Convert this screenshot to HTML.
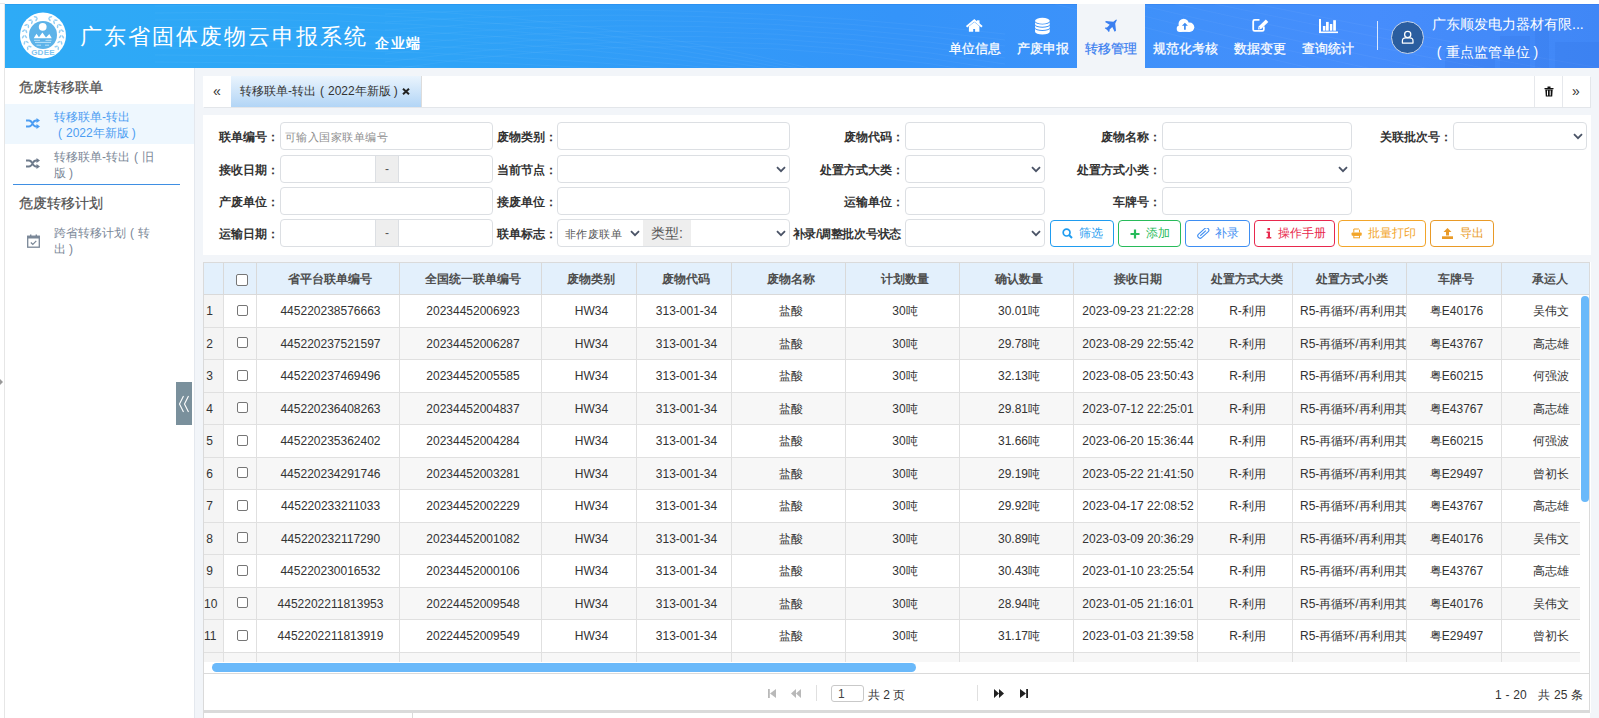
<!DOCTYPE html>
<html><head><meta charset="utf-8"><style>
*{box-sizing:border-box;margin:0;padding:0}
html,body{width:1599px;height:718px;overflow:hidden;background:#fff;font-family:"Liberation Sans",sans-serif;font-size:12px;color:#333}
.abs{position:absolute}
#lline{position:absolute;left:4px;top:4px;width:1px;height:714px;background:#e6e6e6}
#ltri{position:absolute;left:0;top:379px;width:0;height:0;border-top:3px solid transparent;border-bottom:3px solid transparent;border-left:3px solid #999}
#hdr{position:absolute;left:5px;top:4px;width:1594px;height:64px;box-shadow:inset 0 1px 0 rgba(0,70,200,.12);background:linear-gradient(90deg,#2eabf6 0%,#2ea3f7 28%,#329af8 44%,#3494f9 56%,#4190fa 75%,#468dfc 86%,#4087f6 100%);overflow:hidden}
#title{position:absolute;left:75px;top:18px;font-size:22px;color:#fff;white-space:nowrap;letter-spacing:2px}
#sub{position:absolute;left:370px;top:31px;font-size:14px;letter-spacing:1.5px;color:#fff;font-weight:bold;white-space:nowrap}
.nav{position:absolute;top:0;height:64px;text-align:center;color:#fff;font-size:13px;-webkit-text-stroke:.25px currentColor}
.nav .ic{position:absolute;left:0;right:0;top:13px;height:18px}
.nav .tx{position:absolute;left:0;right:0;top:35.5px;white-space:nowrap}
.nav.act{background:#f2f5f9;color:#3b7ff0}
#divd{position:absolute;left:1372px;top:17px;width:1px;height:29px;background:rgba(255,255,255,.8)}
#avatar{position:absolute;left:1386px;top:17px;width:33px;height:33px;border-radius:50%;background:#2a5d9f;border:1px solid #c8d6ea}
#co1{position:absolute;left:1427px;top:11.5px;font-size:14px;color:#fff;white-space:nowrap}
#co2{position:absolute;left:1427px;top:39.5px;font-size:14px;color:#fff;white-space:nowrap}
#side{position:absolute;left:5px;top:68px;width:190px;height:650px;background:#fff;border-right:1px solid #e4e8ee}
.sh{position:absolute;left:14px;font-size:14px;color:#4f4f4f;white-space:nowrap;-webkit-text-stroke:.2px currentColor}
.si{position:absolute;left:0;width:189px}
.si.act{background:#eef7fe}
.si .t{position:absolute;left:49px;font-size:12px;line-height:16px;color:#7a8797;width:104px}
.si.act .t{color:#4c9df2}
.si svg{position:absolute}
#sline{position:absolute;left:8px;top:116px;width:167px;height:1px;background:#3f8fe3}
#handle{position:absolute;left:171px;top:314px;width:16px;height:43px;background:#7a909c}
#content{position:absolute;left:195px;top:68px;width:1404px;height:650px;background:#f2f5f9}
.panel{position:absolute;background:#fff}
#tabs{left:8px;top:8px;width:1387px;height:31px;box-shadow:1px 1px 0 #e3e6ea}
#tabprev{position:absolute;left:0;top:0;width:28px;height:31px;text-align:center;line-height:30px;font-size:14px;color:#333}
#tabact{position:absolute;left:28px;top:0;width:191px;height:31px;background:linear-gradient(#eaf4fd,#b2d5f6);border-right:1px solid #dcdcdc}
#tabact .t{position:absolute;left:9px;top:0;line-height:30px;font-size:12px;color:#333;white-space:nowrap}
#tabact .x{position:absolute;left:172px;top:0;line-height:30px;font-size:13px;color:#222;font-weight:bold}
.tbtn{position:absolute;top:0;width:28px;height:31px;border-left:1px solid #e6e8ec}
#form{left:8px;top:47px;width:1388px;height:140px}
.lb{position:absolute;font-size:12px;font-weight:bold;color:#333;white-space:nowrap;text-align:right;line-height:31px;margin-left:-1px}
.ip{position:absolute;height:28px;border:1px solid #dcdfe3;border-radius:4px;background:#fff}
.ip .ph{position:absolute;left:4px;top:0;line-height:29px;color:#8c8c8c;font-size:11px;letter-spacing:.45px;white-space:nowrap}
.chev{position:absolute;width:10px;height:7px}
.addon{position:absolute;top:0;height:26px;background:#eee}
.btn{position:absolute;top:105px;height:27px;border:1px solid;border-radius:4px;background:#fff;font-size:12px;white-space:nowrap}
.btn .bt{position:absolute;top:0;line-height:25px}
.btn svg{position:absolute}
#tpanel{left:8px;top:194px;width:1387px;height:451px;border:1px solid #dadada;border-bottom:none;box-shadow:1px 0 0 #fff}
#grid{position:absolute;left:0;top:0;width:1385px;height:399px;overflow:hidden}
.hdr{position:absolute;left:0;top:0;width:1400px;height:32px;background:#e3f0fc;border-bottom:1px solid #d9d9d9}
.hc{position:absolute;top:0;height:31px;line-height:32px;text-align:center;font-weight:bold;color:#4e4e4e;border-left:1px solid #d9d9d9;white-space:nowrap;padding-left:4px}
.row{position:absolute;left:0;width:1376px;height:32.5px;background:#fff;border-bottom:1px solid #e0e0e0}
.row.even{background:#f7f7f7}
.c{position:absolute;top:0;height:31.5px;line-height:33px;text-align:center;color:#333;border-left:1px solid #e0e0e0;white-space:nowrap;overflow:hidden;padding-left:5px}
.c.rn{background:#f4f4f4;text-align:center;padding-left:0;padding-right:8px;border-left:none;overflow:visible}
.c.lft{text-align:left;padding-left:7px}
.hcb{width:12px!important;height:12px!important;position:relative;top:1.5px}
.cb{display:inline-block;width:11px;height:11px;border:1px solid #767676;border-radius:2px;background:#fff;vertical-align:middle;margin-top:-3px;margin-left:0px}
#vscroll{position:absolute;left:1377px;top:33px;width:8px;height:206px;background:#6ab9fa;border-radius:4px}
#hscroll{position:absolute;left:8px;top:400px;width:704px;height:9px;background:#6ab9fa;border-radius:5px}
#pager{position:absolute;left:0;top:410px;width:1385px;height:38px;border-top:1px solid #dadada}
#bar{position:absolute;left:8px;top:642px;width:1387px;height:3px;background:#dadada}
#below{position:absolute;left:8px;top:645px;width:1387px;height:10px;background:#fff;border-left:1px solid #dadada}

.lp{display:inline-block;width:1em;text-align:right;padding-right:.33em}
.rp{display:inline-block;width:1em;text-align:left;padding-left:.25em}
#tline{position:absolute;left:0;top:3px;width:5px;height:1px;background:#eaeaea}

</style></head><body>
<div id="lline"></div>
<div id="tline"></div>
<div id="ltri"></div>
<div id="hdr">
  <svg class="abs" style="left:0;top:0" width="1594" height="64" viewBox="0 0 1594 64" fill="none" stroke="rgba(255,255,255,0.045)" stroke-width="1"><path d="M150 2 Q 520 -8.0 830 70" /><path d="M150 9 Q 520 0.5 830 72" /><path d="M150 16 Q 520 9.0 830 74" /><path d="M150 23 Q 520 17.5 830 76" /><path d="M150 30 Q 520 26.0 830 78" /><path d="M150 37 Q 520 34.5 830 80" /><path d="M150 44 Q 520 43.0 830 82" /><path d="M150 51 Q 520 51.5 830 84" /><path d="M150 58 Q 520 60.0 830 86" /><path d="M150 65 Q 520 68.5 830 88" /><path d="M380 10 Q 700 -5 1000 30" /><path d="M380 18 Q 700 -2 1000 36" /><path d="M380 26 Q 700 1 1000 42" /><path d="M380 34 Q 700 4 1000 48" /><path d="M380 42 Q 700 7 1000 54" /><path d="M380 50 Q 700 10 1000 60" /><path d="M380 58 Q 700 13 1000 66" /><path d="M380 66 Q 700 16 1000 72" /><path d="M1050 0 Q 1200 40 1330 70" /><path d="M1090 0 Q 1250 40 1390 70" /><path d="M1130 0 Q 1300 40 1450 70" /><path d="M1170 0 Q 1350 40 1510 70" /><path d="M1210 0 Q 1400 40 1570 70" /><path d="M1250 0 Q 1450 40 1630 70" /><g fill="rgba(30,90,210,0.10)" stroke="none"><rect x="1495" y="32" width="30" height="32"/><rect x="1530" y="20" width="14" height="44"/><rect x="1550" y="38" width="44" height="26"/><rect x="1440" y="48" width="50" height="16"/></g></svg>
  <svg class="abs" style="left:15px;top:8px" width="46" height="47" viewBox="0 0 46 47">
    <circle cx="23" cy="23.5" r="23" fill="#fff"/>
    <ellipse cx="9.82" cy="34.56" rx="1.9" ry="0.8" transform="rotate(195.0 9.82 34.56)" fill="#94cff4"/><ellipse cx="7.68" cy="36.36" rx="1.9" ry="0.8" transform="rotate(265.0 7.68 36.36)" fill="#94cff4"/><ellipse cx="7.05" cy="29.94" rx="1.9" ry="0.8" transform="rotate(213.0 7.05 29.94)" fill="#94cff4"/><ellipse cx="4.46" cy="30.99" rx="1.9" ry="0.8" transform="rotate(283.0 4.46 30.99)" fill="#94cff4"/><ellipse cx="5.84" cy="24.70" rx="1.9" ry="0.8" transform="rotate(231.0 5.84 24.70)" fill="#94cff4"/><ellipse cx="3.05" cy="24.90" rx="1.9" ry="0.8" transform="rotate(301.0 3.05 24.90)" fill="#94cff4"/><ellipse cx="6.31" cy="19.34" rx="1.9" ry="0.8" transform="rotate(249.0 6.31 19.34)" fill="#94cff4"/><ellipse cx="3.59" cy="18.66" rx="1.9" ry="0.8" transform="rotate(319.0 3.59 18.66)" fill="#94cff4"/><ellipse cx="8.41" cy="14.39" rx="1.9" ry="0.8" transform="rotate(267.0 8.41 14.39)" fill="#94cff4"/><ellipse cx="6.04" cy="12.90" rx="1.9" ry="0.8" transform="rotate(337.0 6.04 12.90)" fill="#94cff4"/><ellipse cx="11.94" cy="10.32" rx="1.9" ry="0.8" transform="rotate(285.0 11.94 10.32)" fill="#94cff4"/><ellipse cx="10.14" cy="8.18" rx="1.9" ry="0.8" transform="rotate(355.0 10.14 8.18)" fill="#94cff4"/><ellipse cx="16.56" cy="7.55" rx="1.9" ry="0.8" transform="rotate(303.0 16.56 7.55)" fill="#94cff4"/><ellipse cx="15.51" cy="4.96" rx="1.9" ry="0.8" transform="rotate(373.0 15.51 4.96)" fill="#94cff4"/><ellipse cx="36.18" cy="34.56" rx="1.9" ry="0.8" transform="rotate(-15.0 36.18 34.56)" fill="#94cff4"/><ellipse cx="38.32" cy="36.36" rx="1.9" ry="0.8" transform="rotate(-85.0 38.32 36.36)" fill="#94cff4"/><ellipse cx="38.95" cy="29.94" rx="1.9" ry="0.8" transform="rotate(-33.0 38.95 29.94)" fill="#94cff4"/><ellipse cx="41.54" cy="30.99" rx="1.9" ry="0.8" transform="rotate(-103.0 41.54 30.99)" fill="#94cff4"/><ellipse cx="40.16" cy="24.70" rx="1.9" ry="0.8" transform="rotate(-51.0 40.16 24.70)" fill="#94cff4"/><ellipse cx="42.95" cy="24.90" rx="1.9" ry="0.8" transform="rotate(-121.0 42.95 24.90)" fill="#94cff4"/><ellipse cx="39.69" cy="19.34" rx="1.9" ry="0.8" transform="rotate(-69.0 39.69 19.34)" fill="#94cff4"/><ellipse cx="42.41" cy="18.66" rx="1.9" ry="0.8" transform="rotate(-139.0 42.41 18.66)" fill="#94cff4"/><ellipse cx="37.59" cy="14.39" rx="1.9" ry="0.8" transform="rotate(-87.0 37.59 14.39)" fill="#94cff4"/><ellipse cx="39.96" cy="12.90" rx="1.9" ry="0.8" transform="rotate(-157.0 39.96 12.90)" fill="#94cff4"/><ellipse cx="34.06" cy="10.32" rx="1.9" ry="0.8" transform="rotate(-105.0 34.06 10.32)" fill="#94cff4"/><ellipse cx="35.86" cy="8.18" rx="1.9" ry="0.8" transform="rotate(-175.0 35.86 8.18)" fill="#94cff4"/><ellipse cx="29.44" cy="7.55" rx="1.9" ry="0.8" transform="rotate(-123.0 29.44 7.55)" fill="#94cff4"/><ellipse cx="30.49" cy="4.96" rx="1.9" ry="0.8" transform="rotate(-193.0 30.49 4.96)" fill="#94cff4"/>
    <circle cx="23" cy="23" r="14" fill="#5db3e9"/>
    <circle cx="22.7" cy="14.8" r="3.9" fill="#fff"/>
    <path d="M13.7 26.3 L16.5 21.8 L19.6 26.3 Z M18.3 26.3 L22.4 20.6 L26.5 26.3 Z M25.3 26.3 L29.3 22 L31.8 26.3 Z" fill="#fff"/>
    <path d="M14 28.3 H20 M25.5 28.3 H31.5 M15 30.4 H31 M16.5 33.2 H21 M25 33.2 H29" stroke="#c5e6fa" stroke-width="0.9"/>
    <text x="23" y="43.2" text-anchor="middle" font-size="7" font-weight="bold" fill="#7fc4ef" font-family="Liberation Sans" letter-spacing="0.2" transform="scale(1.15 1) translate(-3 0)">GDEE</text>
  </svg>
  <div id="title">广东省固体废物云申报系统</div>
  <div id="sub">企业端</div>

  <div class="nav" style="left:936px;width:68px">
    <svg class="ic" viewBox="0 0 68 18" width="68" height="18"><path d="M25.6 9.8 L33.3 3.3 L41 9.8" fill="none" stroke="#fff" stroke-width="2" stroke-linejoin="miter"/><rect x="36" y="3.3" width="2.5" height="4" fill="#fff"/><path d="M27.9 9.4 L33.3 5 L38.4 9.2 V14.8 H34.1 V12 H32.2 V14.8 H27.9 Z" fill="#fff"/></svg>
    <div class="tx">单位信息</div>
  </div>
  <div class="nav" style="left:1004px;width:68px">
    <svg class="ic" viewBox="0 0 68 18" width="68" height="18"><ellipse cx="33.4" cy="3.75" rx="7.35" ry="2.95" fill="#fff"/><path d="M26.05 4.9 A7.35 2.6 0 0 0 40.75 4.9 V7.2 A7.35 2.6 0 0 1 26.05 7.2 Z M26.05 8.2 A7.35 2.6 0 0 0 40.75 8.2 V10.5 A7.35 2.6 0 0 1 26.05 10.5 Z M26.05 11.5 A7.35 2.6 0 0 0 40.75 11.5 V14.8 A7.35 2.6 0 0 1 26.05 14.8 Z" fill="#fff"/></svg>
    <div class="tx">产废申报</div>
  </div>
  <div class="nav act" style="left:1072px;width:68px">
    <svg class="ic" viewBox="0 0 68 18" width="68" height="18"><path d="M39.9 2.9 L38.2 6.4 L39 13.8 L37.6 14.8 L35.3 10 L32.6 12.6 L32.6 14.3 L31.6 14.9 L30.2 12.9 L27.8 11.3 L28.3 10.4 L30 10.5 L32.7 7.8 L28 5 L29 4 L36.3 4.8 L39.2 2.6 Z" fill="#3b7ff0"/></svg>
    <div class="tx">转移管理</div>
  </div>
  <div class="nav" style="left:1140px;width:81px">
    <svg class="ic" viewBox="0 0 81 18" width="81" height="18"><circle cx="38.7" cy="7" r="5.2" fill="#fff"/><circle cx="44.6" cy="10.2" r="4.7" fill="#fff"/><circle cx="34.9" cy="11.7" r="3.2" fill="#fff"/><rect x="34.9" y="9" width="9.7" height="5.9" fill="#fff"/><path d="M39.9 5.8 L42.9 8.8 H40.75 V12.7 H39.05 V8.8 H36.9 Z" fill="#3d8cf2"/></svg>
    <div class="tx">规范化考核</div>
  </div>
  <div class="nav" style="left:1221px;width:68px">
    <svg class="ic" viewBox="0 0 68 18" width="68" height="18"><path d="M33.5 2.9 H28.7 Q27.2 2.9 27.2 4.4 V12.4 Q27.2 13.9 28.7 13.9 H36.3 Q37.8 13.9 37.8 12.4 V9.6" fill="none" stroke="#fff" stroke-width="1.8"/><path d="M32 12.6 L32.6 9.6 L39.8 2.4 L42.3 4.9 L35.1 12 Z" fill="#fff"/><path d="M32.9 11.6 L33.3 10.3 L34.3 11.2 Z" fill="#3b8af2"/></svg>
    <div class="tx">数据变更</div>
  </div>
  <div class="nav" style="left:1289px;width:68px">
    <svg class="ic" viewBox="0 0 68 18" width="68" height="18"><rect x="25" y="2" width="2" height="14" fill="#fff"/><rect x="25" y="14.5" width="19" height="1.6" fill="#fff"/><rect x="28.9" y="9" width="2.5" height="4.7" fill="#fff"/><rect x="32" y="4.9" width="2.7" height="8.8" fill="#fff"/><rect x="35.9" y="7" width="2.4" height="6.7" fill="#fff"/><rect x="39.2" y="3.2" width="2.7" height="10.5" fill="#fff"/></svg>
    <div class="tx">查询统计</div>
  </div>
  <div id="divd"></div>
  <div id="avatar"><svg class="abs" style="left:0;top:0" width="31" height="31" viewBox="0 0 31 31"><circle cx="15.7" cy="12.4" r="3.1" fill="none" stroke="#fff" stroke-width="1.25"/><path d="M10.4 21.1 V18.9 Q10.4 15.9 13.6 15.9 H17.8 Q21 15.9 21 18.9 V21.1 Z" fill="none" stroke="#fff" stroke-width="1.25" stroke-linejoin="round"/></svg></div>
  <div id="co1">广东顺发电力器材有限...</div>
  <div id="co2"><span class="lp">(</span>重点监管单位<span class="rp">)</span></div>
</div>

<div id="side">
  <div class="sh" style="top:10.5px">危废转移联单</div>
  <div class="si act" style="top:36px;height:40px">
    <svg style="left:21px;top:14px" width="14" height="11" viewBox="0 0 14 11"><path d="M0 2.5 H3 Q5 2.5 6.5 5.5 Q8 8.5 10 8.5 H11.5 M0 8.5 H3 Q5 8.5 6.5 5.5 Q8 2.5 10 2.5 H11.5" fill="none" stroke="#4c9df2" stroke-width="1.8"/><path d="M10.5 0 L14 2.5 L10.5 5 Z M10.5 6 L14 8.5 L10.5 11 Z" fill="#4c9df2"/></svg>
    <div class="t" style="top:5px">转移联单-转出<br><span class="lp">(</span>2022年新版<span class="rp">)</span></div>
  </div>
  <div class="si" style="top:76px;height:39px">
    <svg style="left:21px;top:14px" width="14" height="11" viewBox="0 0 14 11"><path d="M0 2.5 H3 Q5 2.5 6.5 5.5 Q8 8.5 10 8.5 H11.5 M0 8.5 H3 Q5 8.5 6.5 5.5 Q8 2.5 10 2.5 H11.5" fill="none" stroke="#6e7b8c" stroke-width="1.8"/><path d="M10.5 0 L14 2.5 L10.5 5 Z M10.5 6 L14 8.5 L10.5 11 Z" fill="#6e7b8c"/></svg>
    <div class="t" style="top:5px">转移联单-转出<span class="lp">(</span>旧版<span class="rp">)</span></div>
  </div>
  <div id="sline"></div>
  <div class="sh" style="top:126.5px">危废转移计划</div>
  <div class="si" style="top:155px;height:40px">
    <svg style="left:22px;top:11px" width="13" height="14" viewBox="0 0 13 14"><rect x="0.7" y="2.2" width="11.6" height="11" fill="none" stroke="#7a8797" stroke-width="1.3"/><rect x="0.7" y="2.2" width="11.6" height="2.3" fill="#7a8797"/><rect x="3" y="0.5" width="1.4" height="3" fill="#7a8797"/><rect x="8.6" y="0.5" width="1.4" height="3" fill="#7a8797"/><path d="M3.8 8.5 L5.8 10.3 L9.3 6.8" fill="none" stroke="#7a8797" stroke-width="1.2"/></svg>
    <div class="t" style="top:2px">跨省转移计划<span class="lp">(</span>转出<span class="rp">)</span></div>
  </div>
  <div id="handle"><svg class="abs" style="left:0;top:0" width="16" height="43" viewBox="0 0 16 43"><path d="M7.5 14 L3.5 22 L7.5 30 M12.5 14 L8.5 22 L12.5 30" fill="none" stroke="#fff" stroke-width="1.1"/></svg></div>
</div>

<div id="content">
  <div class="panel" id="tabs">
    <div id="tabprev">«</div>
    <div id="tabact"><span class="t">转移联单-转出<span class="lp">(</span>2022年新版<span class="rp">)</span></span><svg class="abs" style="left:171px;top:12px" width="8" height="7" viewBox="0 0 8 7"><path d="M1 0.8 L7 6.2 M7 0.8 L1 6.2" stroke="#222" stroke-width="2"/></svg></div>
    <div class="tbtn" style="left:1331px"><svg class="abs" style="left:9px;top:10px" width="10" height="11" viewBox="0 0 10 11"><path d="M3.5 0.5 H6.5 V2 H9.5 V3.3 H0.5 V2 H3.5 Z" fill="#111"/><path d="M1.3 3.5 H8.7 L8.2 10.5 H1.8 Z" fill="#111"/><rect x="3" y="4.5" width="1" height="5" fill="#fff"/><rect x="5.7" y="4.5" width="1" height="5" fill="#fff"/></svg></div>
    <div class="tbtn" style="left:1359px"><div class="abs" style="left:9px;top:0;line-height:30px;font-size:14px;color:#333">»</div></div>
  </div>
  <div class="panel" id="form">
    <!-- row1 -->
    <div class="lb" style="left:0;width:77px;top:7px">联单编号：</div>
    <div class="ip" style="left:77px;top:7px;width:213px"><span class="ph">可输入国家联单编号</span></div>
    <div class="lb" style="left:289px;width:66px;top:7px">废物类别：</div>
    <div class="ip" style="left:354px;top:7px;width:233px"></div>
    <div class="lb" style="left:586px;width:116px;top:7px">废物代码：</div>
    <div class="ip" style="left:702px;top:7px;width:140px"></div>
    <div class="lb" style="left:841px;width:118px;top:7px">废物名称：</div>
    <div class="ip" style="left:959px;top:7px;width:190px"></div>
    <div class="lb" style="left:1148px;width:102px;top:7px">关联批次号：</div>
    <div class="ip" style="left:1250px;top:7px;width:134px"><svg class="chev" style="left:119px;top:10px" width="10" height="7" viewBox="0 0 10 7"><path d="M1 1.2 L5 5.2 L9 1.2" fill="none" stroke="#4a5366" stroke-width="1.8"/></svg></div>
    <!-- row2 -->
    <div class="lb" style="left:0;width:77px;top:40px">接收日期：</div>
    <div class="ip" style="left:77px;top:40px;width:213px"><div class="addon" style="left:94px;width:24px;border-left:1px solid #dcdfe3;border-right:1px solid #dcdfe3;text-align:center;line-height:26px;color:#555">-</div></div>
    <div class="lb" style="left:289px;width:66px;top:40px">当前节点：</div>
    <div class="ip" style="left:354px;top:40px;width:233px"><svg class="chev" style="left:218px;top:10px" width="10" height="7" viewBox="0 0 10 7"><path d="M1 1.2 L5 5.2 L9 1.2" fill="none" stroke="#4a5366" stroke-width="1.8"/></svg></div>
    <div class="lb" style="left:586px;width:116px;top:40px">处置方式大类：</div>
    <div class="ip" style="left:702px;top:40px;width:140px"><svg class="chev" style="left:125px;top:10px" width="10" height="7" viewBox="0 0 10 7"><path d="M1 1.2 L5 5.2 L9 1.2" fill="none" stroke="#4a5366" stroke-width="1.8"/></svg></div>
    <div class="lb" style="left:841px;width:118px;top:40px">处置方式小类：</div>
    <div class="ip" style="left:959px;top:40px;width:190px"><svg class="chev" style="left:175px;top:10px" width="10" height="7" viewBox="0 0 10 7"><path d="M1 1.2 L5 5.2 L9 1.2" fill="none" stroke="#4a5366" stroke-width="1.8"/></svg></div>
    <!-- row3 -->
    <div class="lb" style="left:0;width:77px;top:72px">产废单位：</div>
    <div class="ip" style="left:77px;top:72px;width:213px"></div>
    <div class="lb" style="left:289px;width:66px;top:72px">接废单位：</div>
    <div class="ip" style="left:354px;top:72px;width:233px"></div>
    <div class="lb" style="left:586px;width:116px;top:72px">运输单位：</div>
    <div class="ip" style="left:702px;top:72px;width:140px"></div>
    <div class="lb" style="left:841px;width:118px;top:72px">车牌号：</div>
    <div class="ip" style="left:959px;top:72px;width:190px"></div>
    <!-- row4 -->
    <div class="lb" style="left:0;width:77px;top:104px">运输日期：</div>
    <div class="ip" style="left:77px;top:104px;width:213px"><div class="addon" style="left:94px;width:24px;border-left:1px solid #dcdfe3;border-right:1px solid #dcdfe3;text-align:center;line-height:26px;color:#555">-</div></div>
    <div class="lb" style="left:289px;width:66px;top:104px">联单标志：</div>
    <div class="ip" style="left:354px;top:104px;width:233px"><span class="ph" style="left:7px;color:#555">非作废联单</span><svg class="chev" style="left:72px;top:10px" width="10" height="7" viewBox="0 0 10 7"><path d="M1 1.2 L5 5.2 L9 1.2" fill="none" stroke="#4a5366" stroke-width="1.8"/></svg><div class="addon" style="left:85px;width:48px;text-align:center;line-height:26px;font-size:14px;color:#555">类型:</div><svg class="chev" style="left:218px;top:10px" width="10" height="7" viewBox="0 0 10 7"><path d="M1 1.2 L5 5.2 L9 1.2" fill="none" stroke="#4a5366" stroke-width="1.8"/></svg></div>
    <div class="lb" style="left:586px;width:113px;top:104px;letter-spacing:-.3px">补录/调整批次号状态</div>
    <div class="ip" style="left:702px;top:104px;width:140px"><svg class="chev" style="left:125px;top:10px" width="10" height="7" viewBox="0 0 10 7"><path d="M1 1.2 L5 5.2 L9 1.2" fill="none" stroke="#4a5366" stroke-width="1.8"/></svg></div>
    <div class="btn" style="left:847px;width:64px;color:#1f9cf0;border-color:#1f9cf0"><svg style="left:11px;top:7px" width="11" height="11" viewBox="0 0 11 11"><circle cx="4.6" cy="4.6" r="3.4" fill="none" stroke="#1f9cf0" stroke-width="1.7"/><path d="M7 7 L10 10" stroke="#1f9cf0" stroke-width="2"/></svg><span class="bt" style="left:28px">筛选</span></div>
    <div class="btn" style="left:915px;width:63px;color:#27bb5a;border-color:#27bb5a"><svg style="left:11px;top:8px" width="10" height="10" viewBox="0 0 10 10"><path d="M5 0.5 V9.5 M0.5 5 H9.5" stroke="#27bb5a" stroke-width="2.2"/></svg><span class="bt" style="left:27px">添加</span></div>
    <div class="btn" style="left:982px;width:65px;color:#3e8ef2;border-color:#3e8ef2"><svg style="left:11px;top:7px" width="13" height="11" viewBox="0 0 13 11"><g transform="rotate(-42 6.3 5)"><rect x="-0.3" y="2.7" width="13.2" height="4.6" rx="2.3" fill="none" stroke="#3e8ef2" stroke-width="1.1"/><path d="M2.2 5 H9.8" stroke="#3e8ef2" stroke-width="1.1"/></g></svg><span class="bt" style="left:29px">补录</span></div>
    <div class="btn" style="left:1051px;width:81px;color:#e8284d;border-color:#e8284d"><svg style="left:11px;top:7px" width="6" height="11" viewBox="0 0 6 11"><rect x="1.5" y="0" width="2.5" height="2.3" fill="#e8284d"/><path d="M0.5 3.5 H4 V9 H5.3 V10.5 H0.5 V9 H1.8 V5 H0.5 Z" fill="#e8284d"/></svg><span class="bt" style="left:23px">操作手册</span></div>
    <div class="btn" style="left:1135px;width:88px;color:#f2a52a;border-color:#f2a52a"><svg style="left:12px;top:7px" width="11" height="11" viewBox="0 0 11 11"><path d="M2.8 4.5 V1 H7.6 L8.5 1.9 V4.5" fill="none" stroke="#f2a52a" stroke-width="1"/><rect x="0.6" y="4.5" width="10.1" height="3.2" rx="0.8" fill="#f2a52a"/><rect x="2.8" y="7.2" width="5.7" height="2.6" fill="none" stroke="#f2a52a" stroke-width="1"/></svg><span class="bt" style="left:29px">批量打印</span></div>
    <div class="btn" style="left:1227px;width:64px;color:#e99a27;border-color:#e99a27"><svg style="left:11px;top:7px" width="11" height="11" viewBox="0 0 11 11"><path d="M5.5 0 L9.5 4 H7 V7.5 H4 V4 H1.5 Z" fill="#e99a27"/><rect x="0" y="8.3" width="11" height="2.7" fill="#e99a27"/></svg><span class="bt" style="left:29px">导出</span></div>
  </div>
  <div class="panel" id="tpanel">
<div id="grid">
<div class="hdr">
<div class="hc" style="left:0px;width:19px;border-left:none"></div>
<div class="hc" style="left:19px;width:33px"><span class="cb hcb"></span></div>
<div class="hc" style="left:52px;width:143px;">省平台联单编号</div>
<div class="hc" style="left:195px;width:142px;">全国统一联单编号</div>
<div class="hc" style="left:337px;width:95px;">废物类别</div>
<div class="hc" style="left:432px;width:95px;">废物代码</div>
<div class="hc" style="left:527px;width:114px;">废物名称</div>
<div class="hc" style="left:641px;width:114px;">计划数量</div>
<div class="hc" style="left:755px;width:114px;">确认数量</div>
<div class="hc" style="left:869px;width:124px;">接收日期</div>
<div class="hc" style="left:993px;width:95px;">处置方式大类</div>
<div class="hc" style="left:1088px;width:114px;">处置方式小类</div>
<div class="hc" style="left:1202px;width:95px;">车牌号</div>
<div class="hc" style="left:1297px;width:93px;">承运人</div>
</div>
<div class="row" style="top:32.0px">
<div class="c rn" style="left:0px;width:19px">1</div>
<div class="c" style="left:19px;width:33px"><span class="cb"></span></div>
<div class="c" style="left:52px;width:143px">445220238576663</div>
<div class="c" style="left:195px;width:142px">20234452006923</div>
<div class="c" style="left:337px;width:95px">HW34</div>
<div class="c" style="left:432px;width:95px">313-001-34</div>
<div class="c" style="left:527px;width:114px">盐酸</div>
<div class="c" style="left:641px;width:114px">30吨</div>
<div class="c" style="left:755px;width:114px">30.01吨</div>
<div class="c" style="left:869px;width:124px">2023-09-23 21:22:28</div>
<div class="c" style="left:993px;width:95px">R-利用</div>
<div class="c lft" style="left:1088px;width:114px">R5-再循环/再利用其他方式</div>
<div class="c" style="left:1202px;width:95px">粤E40176</div>
<div class="c" style="left:1297px;width:93px">吴伟文</div>
</div>
<div class="row even" style="top:64.5px">
<div class="c rn" style="left:0px;width:19px">2</div>
<div class="c" style="left:19px;width:33px"><span class="cb"></span></div>
<div class="c" style="left:52px;width:143px">445220237521597</div>
<div class="c" style="left:195px;width:142px">20234452006287</div>
<div class="c" style="left:337px;width:95px">HW34</div>
<div class="c" style="left:432px;width:95px">313-001-34</div>
<div class="c" style="left:527px;width:114px">盐酸</div>
<div class="c" style="left:641px;width:114px">30吨</div>
<div class="c" style="left:755px;width:114px">29.78吨</div>
<div class="c" style="left:869px;width:124px">2023-08-29 22:55:42</div>
<div class="c" style="left:993px;width:95px">R-利用</div>
<div class="c lft" style="left:1088px;width:114px">R5-再循环/再利用其他方式</div>
<div class="c" style="left:1202px;width:95px">粤E43767</div>
<div class="c" style="left:1297px;width:93px">高志雄</div>
</div>
<div class="row" style="top:97.0px">
<div class="c rn" style="left:0px;width:19px">3</div>
<div class="c" style="left:19px;width:33px"><span class="cb"></span></div>
<div class="c" style="left:52px;width:143px">445220237469496</div>
<div class="c" style="left:195px;width:142px">20234452005585</div>
<div class="c" style="left:337px;width:95px">HW34</div>
<div class="c" style="left:432px;width:95px">313-001-34</div>
<div class="c" style="left:527px;width:114px">盐酸</div>
<div class="c" style="left:641px;width:114px">30吨</div>
<div class="c" style="left:755px;width:114px">32.13吨</div>
<div class="c" style="left:869px;width:124px">2023-08-05 23:50:43</div>
<div class="c" style="left:993px;width:95px">R-利用</div>
<div class="c lft" style="left:1088px;width:114px">R5-再循环/再利用其他方式</div>
<div class="c" style="left:1202px;width:95px">粤E60215</div>
<div class="c" style="left:1297px;width:93px">何强波</div>
</div>
<div class="row even" style="top:129.5px">
<div class="c rn" style="left:0px;width:19px">4</div>
<div class="c" style="left:19px;width:33px"><span class="cb"></span></div>
<div class="c" style="left:52px;width:143px">445220236408263</div>
<div class="c" style="left:195px;width:142px">20234452004837</div>
<div class="c" style="left:337px;width:95px">HW34</div>
<div class="c" style="left:432px;width:95px">313-001-34</div>
<div class="c" style="left:527px;width:114px">盐酸</div>
<div class="c" style="left:641px;width:114px">30吨</div>
<div class="c" style="left:755px;width:114px">29.81吨</div>
<div class="c" style="left:869px;width:124px">2023-07-12 22:25:01</div>
<div class="c" style="left:993px;width:95px">R-利用</div>
<div class="c lft" style="left:1088px;width:114px">R5-再循环/再利用其他方式</div>
<div class="c" style="left:1202px;width:95px">粤E43767</div>
<div class="c" style="left:1297px;width:93px">高志雄</div>
</div>
<div class="row" style="top:162.0px">
<div class="c rn" style="left:0px;width:19px">5</div>
<div class="c" style="left:19px;width:33px"><span class="cb"></span></div>
<div class="c" style="left:52px;width:143px">445220235362402</div>
<div class="c" style="left:195px;width:142px">20234452004284</div>
<div class="c" style="left:337px;width:95px">HW34</div>
<div class="c" style="left:432px;width:95px">313-001-34</div>
<div class="c" style="left:527px;width:114px">盐酸</div>
<div class="c" style="left:641px;width:114px">30吨</div>
<div class="c" style="left:755px;width:114px">31.66吨</div>
<div class="c" style="left:869px;width:124px">2023-06-20 15:36:44</div>
<div class="c" style="left:993px;width:95px">R-利用</div>
<div class="c lft" style="left:1088px;width:114px">R5-再循环/再利用其他方式</div>
<div class="c" style="left:1202px;width:95px">粤E60215</div>
<div class="c" style="left:1297px;width:93px">何强波</div>
</div>
<div class="row even" style="top:194.5px">
<div class="c rn" style="left:0px;width:19px">6</div>
<div class="c" style="left:19px;width:33px"><span class="cb"></span></div>
<div class="c" style="left:52px;width:143px">445220234291746</div>
<div class="c" style="left:195px;width:142px">20234452003281</div>
<div class="c" style="left:337px;width:95px">HW34</div>
<div class="c" style="left:432px;width:95px">313-001-34</div>
<div class="c" style="left:527px;width:114px">盐酸</div>
<div class="c" style="left:641px;width:114px">30吨</div>
<div class="c" style="left:755px;width:114px">29.19吨</div>
<div class="c" style="left:869px;width:124px">2023-05-22 21:41:50</div>
<div class="c" style="left:993px;width:95px">R-利用</div>
<div class="c lft" style="left:1088px;width:114px">R5-再循环/再利用其他方式</div>
<div class="c" style="left:1202px;width:95px">粤E29497</div>
<div class="c" style="left:1297px;width:93px">曾初长</div>
</div>
<div class="row" style="top:227.0px">
<div class="c rn" style="left:0px;width:19px">7</div>
<div class="c" style="left:19px;width:33px"><span class="cb"></span></div>
<div class="c" style="left:52px;width:143px">445220233211033</div>
<div class="c" style="left:195px;width:142px">20234452002229</div>
<div class="c" style="left:337px;width:95px">HW34</div>
<div class="c" style="left:432px;width:95px">313-001-34</div>
<div class="c" style="left:527px;width:114px">盐酸</div>
<div class="c" style="left:641px;width:114px">30吨</div>
<div class="c" style="left:755px;width:114px">29.92吨</div>
<div class="c" style="left:869px;width:124px">2023-04-17 22:08:52</div>
<div class="c" style="left:993px;width:95px">R-利用</div>
<div class="c lft" style="left:1088px;width:114px">R5-再循环/再利用其他方式</div>
<div class="c" style="left:1202px;width:95px">粤E43767</div>
<div class="c" style="left:1297px;width:93px">高志雄</div>
</div>
<div class="row even" style="top:259.5px">
<div class="c rn" style="left:0px;width:19px">8</div>
<div class="c" style="left:19px;width:33px"><span class="cb"></span></div>
<div class="c" style="left:52px;width:143px">445220232117290</div>
<div class="c" style="left:195px;width:142px">20234452001082</div>
<div class="c" style="left:337px;width:95px">HW34</div>
<div class="c" style="left:432px;width:95px">313-001-34</div>
<div class="c" style="left:527px;width:114px">盐酸</div>
<div class="c" style="left:641px;width:114px">30吨</div>
<div class="c" style="left:755px;width:114px">30.89吨</div>
<div class="c" style="left:869px;width:124px">2023-03-09 20:36:29</div>
<div class="c" style="left:993px;width:95px">R-利用</div>
<div class="c lft" style="left:1088px;width:114px">R5-再循环/再利用其他方式</div>
<div class="c" style="left:1202px;width:95px">粤E40176</div>
<div class="c" style="left:1297px;width:93px">吴伟文</div>
</div>
<div class="row" style="top:292.0px">
<div class="c rn" style="left:0px;width:19px">9</div>
<div class="c" style="left:19px;width:33px"><span class="cb"></span></div>
<div class="c" style="left:52px;width:143px">445220230016532</div>
<div class="c" style="left:195px;width:142px">20234452000106</div>
<div class="c" style="left:337px;width:95px">HW34</div>
<div class="c" style="left:432px;width:95px">313-001-34</div>
<div class="c" style="left:527px;width:114px">盐酸</div>
<div class="c" style="left:641px;width:114px">30吨</div>
<div class="c" style="left:755px;width:114px">30.43吨</div>
<div class="c" style="left:869px;width:124px">2023-01-10 23:25:54</div>
<div class="c" style="left:993px;width:95px">R-利用</div>
<div class="c lft" style="left:1088px;width:114px">R5-再循环/再利用其他方式</div>
<div class="c" style="left:1202px;width:95px">粤E43767</div>
<div class="c" style="left:1297px;width:93px">高志雄</div>
</div>
<div class="row even" style="top:324.5px">
<div class="c rn" style="left:0px;width:19px">10</div>
<div class="c" style="left:19px;width:33px"><span class="cb"></span></div>
<div class="c" style="left:52px;width:143px">4452202211813953</div>
<div class="c" style="left:195px;width:142px">20224452009548</div>
<div class="c" style="left:337px;width:95px">HW34</div>
<div class="c" style="left:432px;width:95px">313-001-34</div>
<div class="c" style="left:527px;width:114px">盐酸</div>
<div class="c" style="left:641px;width:114px">30吨</div>
<div class="c" style="left:755px;width:114px">28.94吨</div>
<div class="c" style="left:869px;width:124px">2023-01-05 21:16:01</div>
<div class="c" style="left:993px;width:95px">R-利用</div>
<div class="c lft" style="left:1088px;width:114px">R5-再循环/再利用其他方式</div>
<div class="c" style="left:1202px;width:95px">粤E40176</div>
<div class="c" style="left:1297px;width:93px">吴伟文</div>
</div>
<div class="row" style="top:357.0px">
<div class="c rn" style="left:0px;width:19px">11</div>
<div class="c" style="left:19px;width:33px"><span class="cb"></span></div>
<div class="c" style="left:52px;width:143px">4452202211813919</div>
<div class="c" style="left:195px;width:142px">20224452009549</div>
<div class="c" style="left:337px;width:95px">HW34</div>
<div class="c" style="left:432px;width:95px">313-001-34</div>
<div class="c" style="left:527px;width:114px">盐酸</div>
<div class="c" style="left:641px;width:114px">30吨</div>
<div class="c" style="left:755px;width:114px">31.17吨</div>
<div class="c" style="left:869px;width:124px">2023-01-03 21:39:58</div>
<div class="c" style="left:993px;width:95px">R-利用</div>
<div class="c lft" style="left:1088px;width:114px">R5-再循环/再利用其他方式</div>
<div class="c" style="left:1202px;width:95px">粤E29497</div>
<div class="c" style="left:1297px;width:93px">曾初长</div>
</div>
<div class="row even" style="top:389.5px">
<div class="c rn" style="left:0px;width:19px"></div>
<div class="c" style="left:19px;width:33px"></div>
<div class="c" style="left:52px;width:143px"></div>
<div class="c" style="left:195px;width:142px"></div>
<div class="c" style="left:337px;width:95px"></div>
<div class="c" style="left:432px;width:95px"></div>
<div class="c" style="left:527px;width:114px"></div>
<div class="c" style="left:641px;width:114px"></div>
<div class="c" style="left:755px;width:114px"></div>
<div class="c" style="left:869px;width:124px"></div>
<div class="c" style="left:993px;width:95px"></div>
<div class="c lft" style="left:1088px;width:114px"></div>
<div class="c" style="left:1202px;width:95px"></div>
<div class="c" style="left:1297px;width:93px"></div>
</div>
</div>
    <div id="vscroll"></div>
    <div id="hscroll"></div>
    <div id="pager">
      <svg class="abs" style="left:564px;top:15px" width="8" height="9" viewBox="0 0 8 9"><rect x="0" y="0" width="1.8" height="9" fill="#b9b9b9"/><path d="M8 0 V9 L2 4.5 Z" fill="#b9b9b9"/></svg>
      <svg class="abs" style="left:587px;top:15px" width="10" height="9" viewBox="0 0 10 9"><path d="M5 0 V9 L0 4.5 Z M10 0 V9 L5 4.5 Z" fill="#b9b9b9"/></svg>
      <div class="abs" style="left:612px;top:11px;width:1px;height:16px;background:#e0e0e0"></div>
      <div class="abs" style="left:627px;top:11px;width:33px;height:17px;border:1px solid #c9c9c9;border-radius:3px;font-size:12px;line-height:17px;padding-left:6px;color:#444">1</div>
      <div class="abs" style="left:664px;top:11.5px;font-size:12px;line-height:18px;color:#333;white-space:nowrap">共 2 页</div>
      <div class="abs" style="left:773px;top:11px;width:1px;height:16px;background:#e0e0e0"></div>
      <svg class="abs" style="left:790px;top:15px" width="10" height="9" viewBox="0 0 10 9"><path d="M0 0 V9 L5 4.5 Z M5 0 V9 L10 4.5 Z" fill="#222"/></svg>
      <svg class="abs" style="left:816px;top:15px" width="8" height="9" viewBox="0 0 8 9"><path d="M0 0 V9 L6 4.5 Z" fill="#222"/><rect x="6.2" y="0" width="1.8" height="9" fill="#222"/></svg>
      <div class="abs" style="left:1291px;top:11.5px;font-size:12px;line-height:18px;color:#333;white-space:nowrap;word-spacing:0.5px">1 - 20&nbsp;&nbsp;&nbsp;共 25 条</div>
    </div>
  </div>
  <div id="bar"></div>
  <div id="below"><div class="abs" style="left:208px;top:0;width:1px;height:10px;background:#dadada"></div></div>
</div>

</body></html>
